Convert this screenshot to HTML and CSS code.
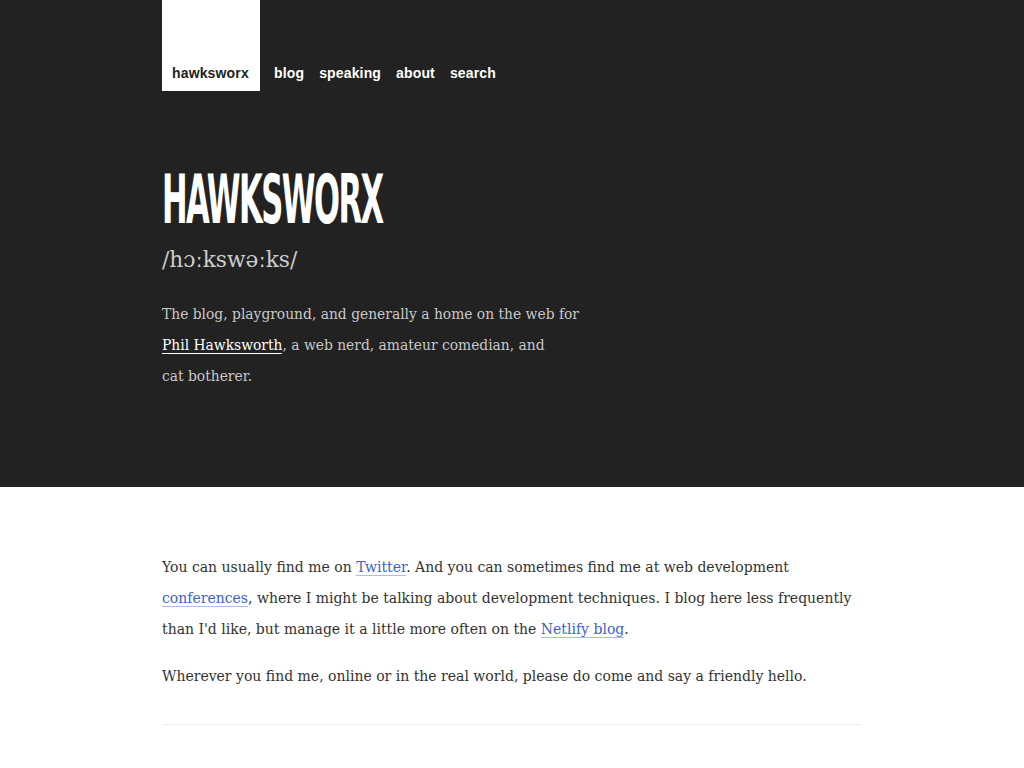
FILE: index.html
```html
<!DOCTYPE html>
<html lang="en">
<head>
<meta charset="utf-8">
<title>Hawksworx</title>
<link rel="stylesheet" href="styles.css">
</head>
<body>
<header class="hero">
  <div class="wrap">
    <nav class="nav">
      <a class="brand" href="#">hawksworx</a>
      <a class="nav-link" href="#">blog</a>
      <a class="nav-link" href="#">speaking</a>
      <a class="nav-link" href="#">about</a>
      <a class="nav-link" href="#">search</a>
    </nav>
    <h1 class="title"><span class="title-text">HAWKSWORX</span></h1>
    <p class="phonetic">/hɔːkswəːks/</p>
    <p class="intro">The blog, playground, and generally a home on the web for<br><a href="#" class="intro-link">Phil Hawksworth</a>, a web nerd, amateur comedian, and<br>cat botherer.</p>
  </div>
</header>
<main class="content">
  <div class="wrap">
    <p>You can usually find me on <a href="#">Twitter</a>. And you can sometimes find me at web development <a href="#">conferences</a>, where I might be talking about development techniques. I blog here less frequently than I'd like, but manage it a little more often on the <a href="#">Netlify blog</a>.</p>
    <p>Wherever you find me, online or in the real world, please do come and say a friendly hello.</p>
    <hr class="rule">
  </div>
</main>
</body>
</html>
```

FILE: styles.css
```css
* { box-sizing: border-box; }
html, body { margin: 0; padding: 0; }
body {
  background: #fff;
  font-family: "DejaVu Serif", Georgia, serif;
  color: #333;
}
.wrap {
  width: 700px;
  margin: 0 auto;
}
.hero {
  background: #222;
  height: 487px;
}
.nav {
  display: flex;
  align-items: flex-end;
  height: 91px;
  font-family: "Liberation Sans", Arial, sans-serif;
  font-weight: bold;
  font-size: 14px;
  line-height: 16px;
  letter-spacing: 0.15px;
}
.nav a { text-decoration: none; }
.brand {
  background: #fff;
  color: #222;
  width: 98px;
  height: 91px;
  display: flex;
  align-items: flex-end;
  padding: 0 0 10px 10px;
  margin-right: 14px;
}
.nav-link {
  color: #fff;
  padding-bottom: 10px;
  margin-right: 15px;
}
.title {
  margin: 77px 0 0;
  font-family: "DejaVu Sans Condensed", "DejaVu Sans", sans-serif;
  font-weight: bold;
  font-size: 67px;
  line-height: 64px;
  color: #fff;
  height: 63px;
  white-space: nowrap;
}
.title-text {
  display: inline-block;
  transform: scaleX(0.508);
  transform-origin: left center;
  letter-spacing: -3px;
}
.phonetic {
  margin: 14px 0 0;
  font-size: 21.7px;
  line-height: 30px;
  color: #ccc;
}
.intro {
  margin: 24px 0 0;
  font-size: 13.85px;
  line-height: 31px;
  color: #c8c8c8;
}
.intro-link {
  color: #fff;
  text-decoration: none;
  border-bottom: 1px solid #fff;
}
.content { padding-top: 65px; }
.content p {
  margin: 0 0 16px;
  font-size: 14px;
  line-height: 31px;
}
.content a {
  color: #3d5fd0;
  text-decoration: none;
  border-bottom: 1px solid #a9bbf2;
}
.rule {
  border: 0;
  border-top: 1px solid #eee;
  margin: 32px 0 0;
}
```
